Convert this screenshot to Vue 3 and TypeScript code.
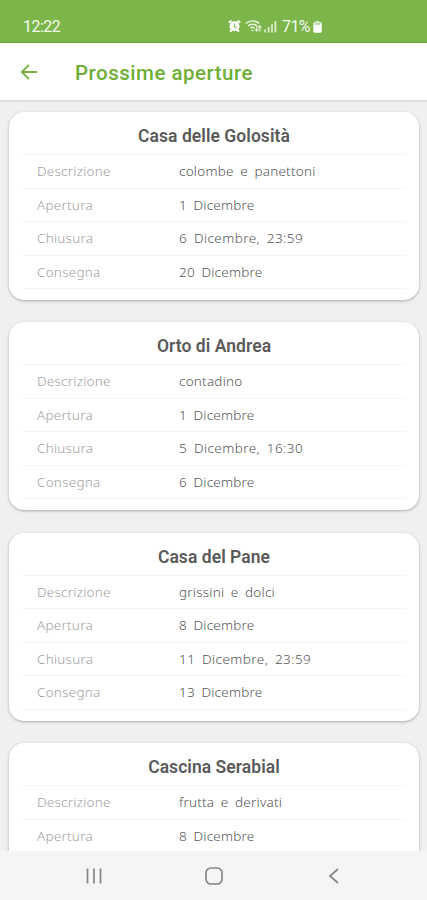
<script setup lang="ts">
interface Opening {
  name: string
  description: string
  opens: string
  closes: string
  delivery: string
}

const openings: Opening[] = [
  { name: 'Casa delle Golosità', description: 'colombe e panettoni', opens: '1 Dicembre', closes: '6 Dicembre, 23:59', delivery: '20 Dicembre' },
  { name: 'Orto di Andrea', description: 'contadino', opens: '1 Dicembre', closes: '5 Dicembre, 16:30', delivery: '6 Dicembre' },
  { name: 'Casa del Pane', description: 'grissini e dolci', opens: '8 Dicembre', closes: '11 Dicembre, 23:59', delivery: '13 Dicembre' },
  { name: 'Cascina Serabial', description: 'frutta e derivati', opens: '8 Dicembre', closes: '', delivery: '' },
]

const rowsOf = (o: Opening) =>
  [
    { kind: 'text', label: 'Descrizione', value: o.description },
    { kind: 'date', label: 'Apertura', value: o.opens },
    { kind: 'datetime', label: 'Chiusura', value: o.closes },
    { kind: 'date', label: 'Consegna', value: o.delivery },
  ].filter((row) => row.value)
</script>

<template>
  <div class="screen">
    <div class="status">
      <span class="clock">12:22</span>
      <div class="indicators">
        <svg class="alarm" width="13" height="14" viewBox="0 0 13 14">
          <path d="M.8 3.8 3.4 1.6M12.2 3.8 9.6 1.6M2 12.6l1.8-1.6M11 12.6l-1.8-1.6" stroke="#fff" stroke-width="2" fill="none" />
          <circle cx="6.5" cy="7.3" r="5" fill="#fff" />
          <path d="M6.5 4.4v3.2l2 1.1" stroke="#7ab648" stroke-width="1.1" fill="none" />
        </svg>
        <svg class="wifi" width="17" height="14" viewBox="0 0 17 14">
          <path d="M.8 4.4C4.6 1.2 10.4 1.2 14.2 4.4M3 6.9c2.6-2.2 6.4-2.2 9 0M5.4 9.2c1.3-1 3-1 4.2 0" stroke="#e3f1d6" stroke-width="1.7" fill="none" />
          <path d="M9.2 11 7.5 12.6 5.8 11z" fill="#e3f1d6" />
          <path d="M11.8 7v5M10.2 10.4l1.6 1.7 1.6-1.7M14.8 12.4V7M13.2 8.6l1.6-1.7 1.6 1.7" stroke="#eaf5df" stroke-width="1.1" fill="none" />
        </svg>
        <svg class="signal" width="13" height="13" viewBox="0 0 13 13">
          <path d="M1.2 12.5V9.5M4.6 12.5V7M8 12.5V4.2M11.4 12.5V1" stroke="#e0f0d1" stroke-width="1.7" fill="none" />
        </svg>
        <span class="percent">71%</span>
        <svg class="battery" width="9" height="13" viewBox="0 0 9 13">
          <path d="M2.8.8h3.4v1.8H2.8z" fill="#d3e8bf" />
          <rect x=".3" y="2.2" width="8.4" height="10.5" rx="1.4" fill="#fff" />
          <path d="M1.5 2.8h6v2h-6z" fill="#b5d897" />
        </svg>
      </div>
    </div>

    <header class="bar">
      <svg width="18" height="18" viewBox="0 0 18 18">
        <path d="M17 9H2M9 1.8 1.8 9 9 16.2" fill="none" stroke="#74b33b" stroke-width="1.8" />
      </svg>
      <h1>Prossime aperture</h1>
    </header>

    <main class="list">
      <section v-for="o in openings" :key="o.name" class="card">
        <h2>{{ o.name }}</h2>
        <dl>
          <div v-for="row in rowsOf(o)" :key="row.label" class="row">
            <dt>{{ row.label }}</dt>
            <dd :class="row.kind">{{ row.value }}</dd>
          </div>
        </dl>
      </section>
    </main>

    <nav class="nav">
      <svg width="18" height="18" viewBox="0 0 18 18">
        <path d="M2.5 1.5v15M9 1.5v15M15.5 1.5v15" stroke="#858585" stroke-width="1.7" />
      </svg>
      <svg width="18" height="18" viewBox="0 0 18 18">
        <rect x="1" y="1" width="16" height="16" rx="5" fill="none" stroke="#858585" stroke-width="1.7" />
      </svg>
      <svg width="18" height="18" viewBox="0 0 18 18">
        <path d="M13 2 5 9l8 7" fill="none" stroke="#858585" stroke-width="1.7" />
      </svg>
    </nav>
  </div>
</template>

<style>
body {
  margin: 0;
  overflow: hidden;
}
</style>

<style scoped>
.screen {
  width: 427px;
  height: 900px;
  display: flex;
  flex-direction: column;
  overflow: hidden;
  background: #f0f0f0;
  font-family: Roboto, sans-serif;
}
.status {
  box-sizing: border-box;
  height: 43px;
  flex: none;
  padding: 10px 105px 0 23px;
  display: flex;
  align-items: center;
  justify-content: space-between;
  background: #7cb64b;
  border-bottom: 1px solid #6ba535;
  color: #f3faec;
  font-size: 16px;
}
.clock {
  letter-spacing: -0.5px;
}
.indicators {
  display: flex;
  align-items: center;
}
.wifi {
  margin-left: 4px;
}
.signal {
  margin-left: 2px;
}
.percent {
  margin-left: 5px;
  width: 31px;
  font-size: 16px;
  letter-spacing: -0.6px;
}
.bar {
  box-sizing: border-box;
  height: 59px;
  flex: none;
  display: flex;
  align-items: center;
  gap: 37px;
  padding: 0 20px;
  background: #fff;
  border-bottom: 2px solid #dedede;
}
h1 {
  margin: 3px 0 0;
  font-size: 20.5px;
  font-weight: 500;
  letter-spacing: 0.5px;
  color: #6fae35;
}
.list {
  flex: 1;
  min-height: 0;
  overflow: hidden;
  padding: 10px 8px 0 9px;
}
.card {
  box-sizing: border-box;
  height: 187.8px;
  margin-bottom: 22.7px;
  padding: 0 13px;
  border-radius: 15px;
  background: #fff;
  box-shadow: 0 1px 3px rgba(0, 0, 0, 0.3);
}
h2 {
  margin: 0;
  height: 42px;
  line-height: 48px;
  text-align: center;
  font-size: 17.5px;
  font-weight: 600;
  letter-spacing: 0.05px;
  color: #5a5a5a;
}
dl {
  margin: 0;
  border-bottom: 1px solid #f4f4f4;
}
.row {
  box-sizing: border-box;
  height: 33.5px;
  padding-left: 15px;
  display: grid;
  grid-template-columns: 142px 1fr;
  border-top: 1px solid #f4f4f4;
  font-family: "Noto Sans", sans-serif;
  font-size: 13.5px;
  font-weight: 300;
  line-height: 33.2px;
}
dt {
  color: #a0a0a0;
  letter-spacing: 0.24px;
}
dd {
  margin: 0;
  color: #555;
  letter-spacing: 0.22px;
  word-spacing: 2.8px;
}
dd.datetime {
  letter-spacing: 0.43px;
}
.nav {
  height: 49px;
  flex: none;
  display: grid;
  grid-template-columns: repeat(3, 120px);
  justify-content: center;
  place-items: center;
  background: #f5f5f5;
}
</style>
